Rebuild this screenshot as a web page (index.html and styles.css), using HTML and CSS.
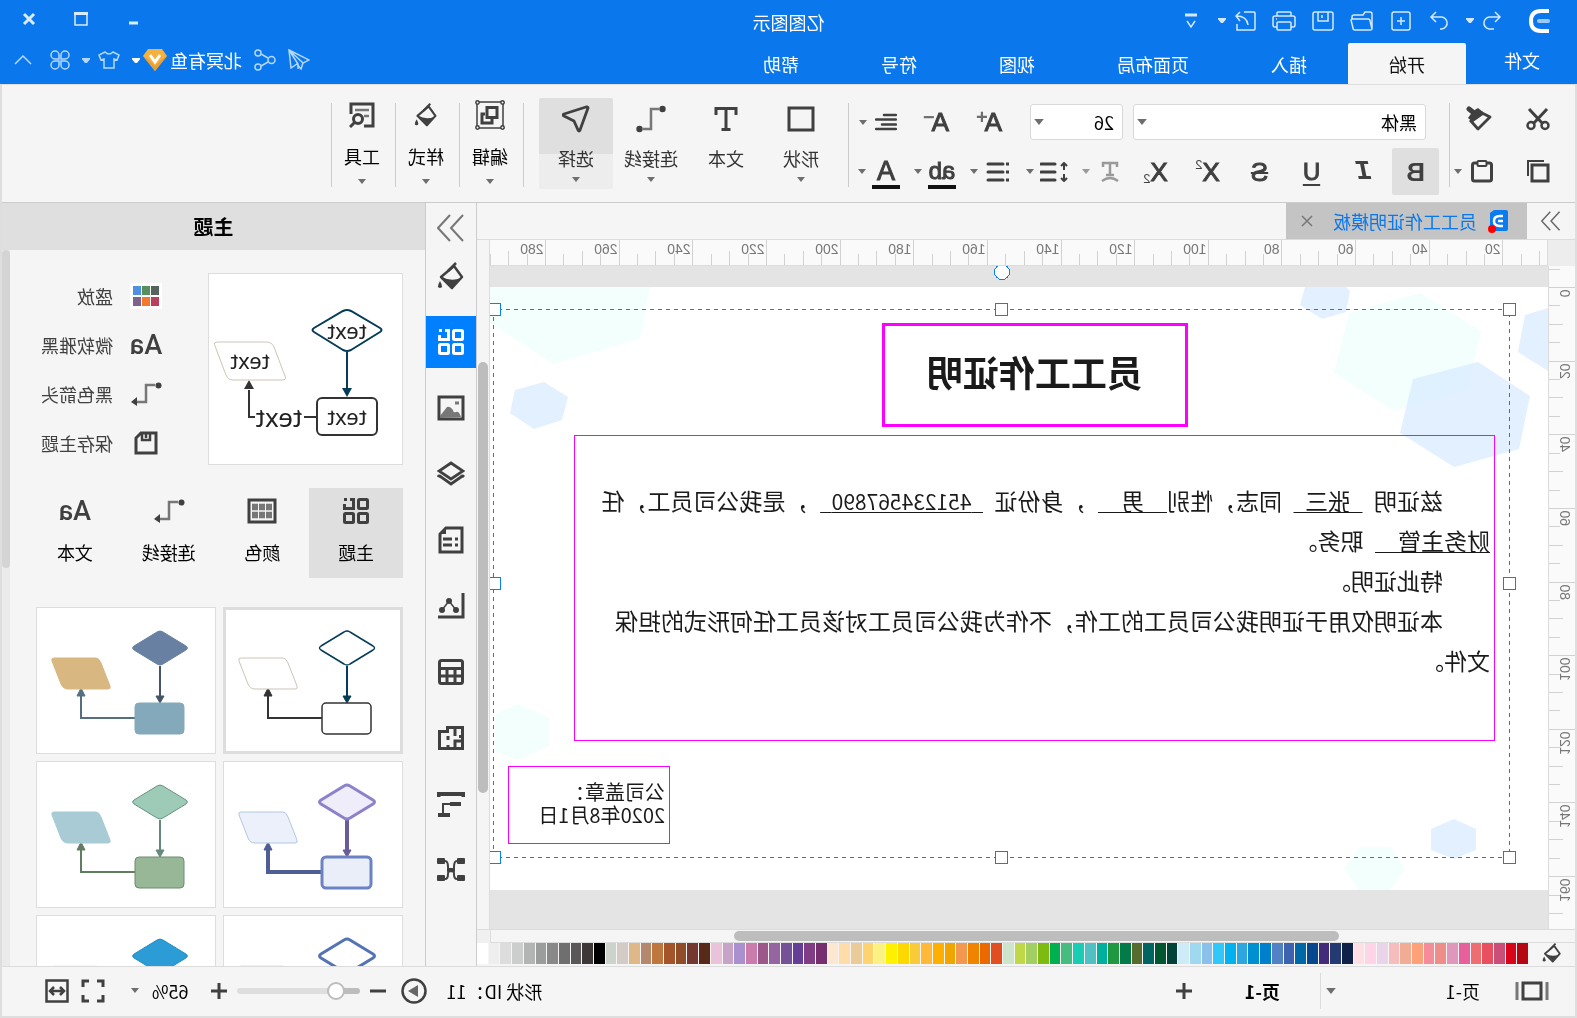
FILE: index.html
```html
<!DOCTYPE html>
<html lang="zh-CN">
<head>
<meta charset="utf-8">
<title>亿图图示</title>
<link rel="stylesheet" href="styles.css">
</head>
<body>
<svg class="sprite" aria-hidden="true">
  <symbol id="caret" viewBox="0 0 8 5"><path d="M0 0h8L4 5z" fill="currentColor"/></symbol>
  <symbol id="undo" viewBox="0 0 20 20"><path d="M7 1 2 6l5 5M2 6h9a6 6 0 0 1 2 12H8" /></symbol>
  <symbol id="redo" viewBox="0 0 20 20"><path d="m13 1 5 5-5 5M18 6H9a6 6 0 0 0-2 12h2" /></symbol>
  <symbol id="new" viewBox="0 0 20 20"><rect x="1" y="1" width="18" height="18" rx="2"/><path d="M10 6v8M6 10h8"/></symbol>
  <symbol id="folder" viewBox="0 0 24 20"><path d="M2 18V3q0-2 2-2h5l2 3h9q2 0 2 2v2M2 18q0 1 2 1h15q2 0 2-2l2-8q0-1-2-1H6Q4 8 4 10z"/></symbol>
  <symbol id="save" viewBox="0 0 22 20"><rect x="1" y="1" width="20" height="18" rx="2"/><path d="M6 1v9h10V1M12 4v3"/></symbol>
  <symbol id="print" viewBox="0 0 24 20"><path d="M5 5V2q0-1 1-1h12q1 0 1 1v3M5 16H3q-2 0-2-2V7q0-2 2-2h18q2 0 2 2v7q0 2-2 2h-2M19 8h1"/><rect x="5" y="11" width="14" height="8" rx="1"/></symbol>
  <symbol id="export" viewBox="0 0 22 20"><path d="M12 1H2q-1 0-1 1v16q0 1 1 1h17v-6M8 14q1-9 12-9M16 1l4 4-4 5"/></symbol>
  <symbol id="more" viewBox="0 0 12 18"><path d="M0 3h12" stroke-width="3"/><path d="m2 9 4 6 4-6"/></symbol>
  <symbol id="plane" viewBox="0 0 22 22"><path d="M21 1 1 11l6 3 2 6 4-5 6 4zM21 1 7 14M21 1l-9 14v5"/></symbol>
  <symbol id="share" viewBox="0 0 22 22"><circle cx="4.500" cy="11" r="3.500"/><circle cx="18" cy="4" r="3"/><circle cx="18" cy="18" r="3"/><path d="m8 9 7-4M8 13l7 4"/></symbol>
  <symbol id="shirt" viewBox="0 0 22 18"><path d="M7 1q4 4 8 0l6 3-2 5-3-1v9H6V8L3 9 1 4z"/></symbol>
  <symbol id="clover" viewBox="0 0 20 20"><path d="M9 9V5a4 4 0 1 0-4 4zM11 9h4a4 4 0 1 0-4-4zM9 11H5a4 4 0 1 0 4 4zM11 11v4a4 4 0 1 0 4-4z"/></symbol>
  <symbol id="scissors" viewBox="0 0 24 24"><path d="M3 2 17 17M21 2 7 17" stroke-width="3"/><circle cx="5" cy="18.500" r="3.500" stroke-width="2.500"/><circle cx="19" cy="18.500" r="3.500" stroke-width="2.500"/></symbol>
  <symbol id="painter" viewBox="0 0 26 26"><path d="M12 6 2 11l12 12 8-9" stroke-width="2.800" stroke-linejoin="round"/><path d="m9 6 5-4 5 3 5 7-5 4-10-7z" fill="currentColor" stroke="none"/><path d="m23 3-5 4" stroke-width="5" stroke-linecap="round"/></symbol>
  <symbol id="copy" viewBox="0 0 24 24"><rect x="2" y="6" width="16" height="16" stroke-width="3"/><path d="M6 2h16v15" stroke-width="2"/></symbol>
  <symbol id="paste" viewBox="0 0 24 24"><rect x="2.500" y="4" width="19" height="18" rx="2" stroke-width="3"/><rect x="7.500" y="2" width="9" height="5" rx="1" fill="#f5f5f5" stroke-width="2"/></symbol>
  <symbol id="align" viewBox="0 0 22 18"><path d="M1 2h12M1 6.500h20M1 11.500h14M1 16h20" stroke-width="2.500" stroke-linecap="round"/></symbol>
  <symbol id="spacing" viewBox="0 0 28 20"><path d="M13 2h14M13 10h14M13 18h14" stroke-width="3" stroke-linecap="round"/><path d="M4 1v7M1 4l3-3 3 3M4 19v-7M1 16l3 3 3-3" stroke-width="2"/></symbol>
  <symbol id="list" viewBox="0 0 28 20"><path d="M9 2h15M9 10h15M9 18h15" stroke-width="3" stroke-linecap="round"/><path d="M3 2h3M3 10h3M3 18h3" stroke-width="3"/></symbol>
  <symbol id="shape" viewBox="0 0 28 26"><rect x="2" y="2" width="24" height="22" stroke-width="3"/></symbol>
  <symbol id="texttool" viewBox="0 0 28 26"><path d="M4 9V2.500h20V9M14 3v20M9.500 23.500h9" stroke-width="3"/></symbol>
  <symbol id="connector" viewBox="0 0 30 28"><path d="M7 4h8v20h8" stroke="#777" stroke-width="2.500"/><circle cx="3.500" cy="4" r="3.200" fill="currentColor" stroke="none"/><circle cx="26.500" cy="24" r="3.200" fill="currentColor" stroke="none"/></symbol>
  <symbol id="connarrow" viewBox="0 0 32 24"><path d="M7 3h9v17h9" stroke="#777" stroke-width="2.500"/><circle cx="3.500" cy="3.500" r="3" fill="currentColor" stroke="none"/><path d="m25 15 6 5-6 4z" fill="currentColor" stroke="none"/></symbol>
  <symbol id="select" viewBox="0 0 28 28"><path d="M3 2q-1 0-1 1l8 22q1 2 2 0l4-9 10-5q2-1 0-2L4 2z" stroke-width="2.800" stroke-linejoin="round"/></symbol>
  <symbol id="group" viewBox="0 0 30 30"><rect x="2" y="2" width="26" height="26" stroke-width="1.500"/><g fill="#f5f5f5" stroke-width="1.500"><circle cx="2.500" cy="2.500" r="1.700"/><circle cx="27.500" cy="2.500" r="1.700"/><circle cx="2.500" cy="27.500" r="1.700"/><circle cx="27.500" cy="27.500" r="1.700"/></g><rect x="8" y="7.500" width="10" height="10" stroke-width="3"/><path d="M20 14h3v9h-10v-4" stroke-width="3"/></symbol>
  <symbol id="bucket" viewBox="0 0 28 28"><path d="M11 4 24 15 13 26 3 15z" stroke-width="2.500" stroke-linejoin="round"/><path d="M4 16q10 4 19-1L13 25z" fill="currentColor" stroke="none"/><path d="m9 1 8 8" stroke-width="2.500"/><path d="M25 19q4 7 0 7t0-7" fill="currentColor" stroke="none"/></symbol>
  <symbol id="find" viewBox="0 0 26 26"><path d="M11 24H2V2h22v10" stroke-width="3"/><path d="M6 8h14M6 14h5" stroke="#777" stroke-width="2.500"/><circle cx="17" cy="17" r="4.500" stroke-width="3"/><path d="m20 20 5 5" stroke-width="3"/></symbol>
  <symbol id="grid" viewBox="0 0 28 28"><g stroke-width="3"><rect x="2.500" y="2.500" width="9" height="9" rx="1"/><rect x="2.500" y="16.500" width="9" height="9" rx="1"/><rect x="16.500" y="16.500" width="9" height="9" rx="1"/><path d="M20 2.500h-3.500v9h9V7M23 2.500h3" /></g></symbol>
  <symbol id="image" viewBox="0 0 28 26"><rect x="2" y="2" width="24" height="22" stroke-width="3"/><path d="M4 22q2-6 5-5t3-2q3-4 6-3l7 9v2z" fill="#777" stroke="none"/><path d="M6 8h4" stroke="#777" stroke-width="3"/></symbol>
  <symbol id="layers" viewBox="0 0 28 28"><path d="m14 3 12 8-12 8L2 11z" stroke-width="2.800"/><path d="M1 17q2-2 3 0l10 7 10-7q2-2 3 0" stroke-width="2.800"/></symbol>
  <symbol id="note" viewBox="0 0 26 28"><path d="M2 2h16l6 6v18H2z" stroke-width="3"/><path d="M18 2v6h6" fill="currentColor" stroke="none"/><path d="M6 13h3M12 13h9M6 19h3M12 19h9" stroke-width="3"/></symbol>
  <symbol id="chart" viewBox="0 0 28 28"><path d="M2 1v24h25" stroke-width="3"/><path d="m9 18 7-9 7 9" stroke-width="1.500"/><g fill="currentColor" stroke="none"><circle cx="9" cy="18" r="3"/><circle cx="16" cy="9" r="3"/><circle cx="23" cy="18" r="3"/></g></symbol>
  <symbol id="table" viewBox="0 0 28 28"><rect x="2.500" y="2.500" width="23" height="23" rx="2" stroke-width="3"/><path d="M3 10.500h23M3 18h23M10 11v15M18 11v15" stroke-width="3"/></symbol>
  <symbol id="floor" viewBox="0 0 28 28"><path d="M2.500 3.500h15v4h8v17h-23zM10 4v8M2 12.500h4M3 17h7v8M17 12v4M17 21v4" stroke-width="3"/></symbol>
  <symbol id="gantt" viewBox="0 0 28 28"><path d="M1.500 7V4h25v3" stroke-width="4"/><path d="M4 14h11M15 25h12" stroke-width="4"/><path d="M14 14h8v9" stroke-width="2"/></symbol>
  <symbol id="network" viewBox="0 0 28 28"><path d="M4 5h4q3 0 3 6t3 4q3 2 3-4t3-6h5M4 23h4q3 0 3-5t3-4q3-1 3 4t3 5h5" stroke-width="2"/><g fill="currentColor" stroke="none"><rect y="2" width="8" height="6" rx="1"/><rect x="20" y="2" width="8" height="6" rx="1"/><rect y="19" width="8" height="6" rx="1"/><rect x="20" y="19" width="8" height="6" rx="1"/><rect x="10" y="12" width="8" height="4" rx="1"/></g></symbol>
  <symbol id="colors" viewBox="0 0 30 26"><rect x="2" y="2" width="26" height="22" stroke-width="3"/><path d="M5 9h20M5 17h20" stroke="#777" stroke-width="6.500" stroke-dasharray="6 1"/></symbol>
  <symbol id="disk" viewBox="0 0 24 24"><path d="M2 2h15l5 5v15H2z" stroke-width="3"/><path d="M8 3v6h8V3M12 3v4" stroke-width="2.500"/></symbol>
  <symbol id="more2" viewBox="0 0 28 28"><path d="m2 1 12 13L2 27M15 1l12 13-12 13" stroke-width="2"/></symbol>
  <symbol id="pages" viewBox="0 0 34 20"><rect x="8" y="2" width="18" height="16" stroke-width="3"/><path d="M2 1v18M32 1v18" stroke="#777" stroke-width="3"/></symbol>
  <symbol id="play" viewBox="0 0 26 26"><circle cx="13" cy="13" r="11.500" stroke-width="2.500"/><path d="m9 7 10 6-10 6z" fill="#666" stroke="none"/></symbol>
  <symbol id="full" viewBox="0 0 24 24"><path d="M8 2H2v6M16 2h6v6M8 22H2v-6M16 22h6v-6" stroke-width="3"/></symbol>
  <symbol id="fit" viewBox="0 0 24 24"><rect x="1.500" y="1.500" width="21" height="21" stroke-width="2.500"/><path d="M6 12h12M9 8l-4 4 4 4M15 8l4 4-4 4" stroke-width="2.500"/></symbol>
  <symbol id="flow" viewBox="0 0 180 147">
    <path class="down" d="M56 59v31"/><path class="down-head" d="m56 96-4-7h8z"/>
    <path class="back" d="M81 111h54V88"/><path class="back-head" d="m135 81-4 8h8z"/>
    <path class="diamond" d="M53 25q3-2 6 0l23 14q3 2 0 4L59 57q-3 2-6 0L30 43q-3-2 0-4z"/>
    <path class="slant" d="M120 51h42q3 0 2 3l-9 23q-2 5-7 5h-40q-3 0-2-3l9-23q2-5 5-5z"/>
    <rect class="box" x="32" y="96" width="49" height="31" rx="4"/>
  </symbol>
</svg>

<header class="titlebar">
  <div class="title-row">
    <div class="quick">
      <svg class="logo" viewBox="0 0 22 24" width="22" height="24"><path d="M1 2h8q10 0 10 10T9 22H1" stroke="#fff" stroke-width="4"/><path d="M2 12h9" stroke="#9cc9fb" stroke-width="4" stroke-linecap="round"/></svg>
      <button aria-label="撤销"><svg width="20" height="20"><use href="#undo"/></svg><svg width="8" height="5"><use href="#caret"/></svg></button>
      <button aria-label="恢复"><svg width="20" height="20"><use href="#redo"/></svg></button>
      <button aria-label="新建"><svg width="20" height="20"><use href="#new"/></svg></button>
      <button aria-label="打开"><svg width="24" height="20"><use href="#folder"/></svg></button>
      <button aria-label="保存"><svg width="22" height="20"><use href="#save"/></svg></button>
      <button aria-label="打印"><svg width="24" height="20"><use href="#print"/></svg></button>
      <button aria-label="导出"><svg width="22" height="20"><use href="#export"/></svg><svg width="8" height="5"><use href="#caret"/></svg></button>
      <button aria-label="更多"><svg width="12" height="18"><use href="#more"/></svg></button>
    </div>
    <h1 class="app-name">亿图图示</h1>
    <div class="window">
      <button aria-label="最小化"><svg width="14" height="14" viewBox="0 0 14 14"><path d="M2 11h9" stroke-width="3"/></svg></button>
      <button aria-label="最大化"><svg width="14" height="14" viewBox="0 0 14 14"><path d="M1 1h12v12H1z"/><path d="M0 1.500h14" stroke-width="3"/></svg></button>
      <button aria-label="关闭"><svg width="14" height="14" viewBox="0 0 14 14"><path d="m2 2 10 10M12 2 2 12" stroke-width="3"/></svg></button>
    </div>
  </div>
  <div class="menu-row">
    <nav class="menu">
      <button class="file">文件</button><button class="active">开始</button><button>插入</button><button>页面布局</button><button>视图</button><button>符号</button><button>帮助</button>
    </nav>
    <div class="account">
      <button aria-label="发送"><svg width="22" height="22"><use href="#plane"/></svg></button>
      <button aria-label="分享"><svg width="22" height="22"><use href="#share"/></svg></button>
      <button class="user">北冥有鱼<svg width="24" height="22" viewBox="0 0 24 22"><path d="M5 0h14l5 7-12 15L0 7z" fill="#f5b040" stroke="none"/><path d="m0 7 12 15L24 7l-5 3-7 7-7-7z" fill="#e89f38" stroke="none"/><path d="m7 6 5 7 5-7" stroke="#fff" stroke-width="3"/></svg><svg width="8" height="5"><use href="#caret"/></svg></button>
      <button aria-label="皮肤"><svg width="22" height="18"><use href="#shirt"/></svg><svg width="8" height="5"><use href="#caret"/></svg></button>
      <button aria-label="应用"><svg width="20" height="20"><use href="#clover"/></svg></button>
      <button class="fold" aria-label="收起"><svg width="18" height="10" viewBox="0 0 18 10"><path d="m1 9 8-8 8 8"/></svg></button>
    </div>
  </div>
</header>

<div class="frame">
  <section class="ribbon">
    <div class="clip">
      <div class="clip-row"><button aria-label="剪切"><svg width="24" height="24"><use href="#scissors"/></svg></button><button aria-label="格式刷"><svg width="26" height="26"><use href="#painter"/></svg></button></div>
      <div class="clip-row"><button aria-label="复制"><svg width="24" height="24"><use href="#copy"/></svg></button><button class="split" aria-label="粘贴"><svg width="24" height="24"><use href="#paste"/></svg><svg class="caret" width="8" height="5"><use href="#caret"/></svg></button></div>
    </div>
    <i class="rule"></i>
    <div class="font">
      <div class="font-row">
        <label class="combo combo-font"><select aria-label="字体"><option>黑体</option></select><svg class="caret" width="10" height="6"><use href="#caret"/></svg></label>
        <label class="combo combo-size"><select aria-label="字号"><option>26</option></select><svg class="caret" width="10" height="6"><use href="#caret"/></svg></label>
        <div class="sizes">
          <button aria-label="增大字号"><span class="glyph">A</span><sup>+</sup></button>
          <button aria-label="减小字号"><span class="glyph">A</span><sup>−</sup></button>
          <button class="split" aria-label="对齐"><svg width="22" height="18"><use href="#align"/></svg><svg class="caret" width="8" height="5"><use href="#caret"/></svg></button>
        </div>
      </div>
      <div class="format-row">
        <button class="on bold">B</button><button class="italic">I</button><button class="under">U</button><button class="strike">S</button><button class="script">X<sup>2</sup></button><button class="script">X<sub>2</sub></button>
        <div class="splits">
          <button class="split off" aria-label="文字方向"><span><svg width="18" height="22" viewBox="0 0 18 22"><path d="M2 6V2h14v4M9 2v12M5 14h8" stroke-width="2.500"/><path d="M1 20q8-6 16 0" stroke-width="2.500"/></svg></span><svg class="caret" width="8" height="5"><use href="#caret"/></svg></button>
          <button class="split" aria-label="行距"><span><svg width="28" height="20"><use href="#spacing"/></svg></span><svg class="caret" width="8" height="5"><use href="#caret"/></svg></button>
          <button class="split" aria-label="项目符号"><span><svg width="28" height="20"><use href="#list"/></svg></span><svg class="caret" width="8" height="5"><use href="#caret"/></svg></button>
          <button class="split"><span class="ink small">ab</span><svg class="caret" width="8" height="5"><use href="#caret"/></svg></button>
          <button class="split"><span class="ink">A</span><svg class="caret" width="8" height="5"><use href="#caret"/></svg></button>
        </div>
      </div>
    </div>
    <i class="rule"></i>
    <div class="tools">
      <button class="tool"><svg width="28" height="26"><use href="#shape"/></svg>形状<svg class="caret" width="8" height="5"><use href="#caret"/></svg></button>
      <button class="tool"><svg width="28" height="26"><use href="#texttool"/></svg>文本</button>
      <button class="tool"><svg width="30" height="28"><use href="#connector"/></svg>连接线<svg class="caret" width="8" height="5"><use href="#caret"/></svg></button>
      <button class="tool on"><svg width="28" height="28"><use href="#select"/></svg>选择<svg class="caret" width="8" height="5"><use href="#caret"/></svg></button>
    </div>
    <i class="rule"></i>
    <button class="tool block"><svg width="30" height="30"><use href="#group"/></svg>编辑<svg class="caret" width="8" height="5"><use href="#caret"/></svg></button>
    <i class="rule"></i>
    <button class="tool block"><svg width="24" height="24"><use href="#bucket"/></svg>样式<svg class="caret" width="8" height="5"><use href="#caret"/></svg></button>
    <i class="rule"></i>
    <button class="tool block"><svg width="26" height="26"><use href="#find"/></svg>工具<svg class="caret" width="8" height="5"><use href="#caret"/></svg></button>
    <i class="rule"></i>
  </section>

  <main class="work">
    <section class="editor">
      <div class="tabs">
        <button class="expand" aria-label="展开"><svg width="20" height="20"><use href="#more2"/></svg></button>
        <div class="doc-tab">
          <svg class="doc-icon" width="22" height="24" viewBox="0 0 22 24"><path d="M1 3q0-2 2-2h12l4 3v18H3q-2 0-2-2z" fill="#0a7cf0"/><path d="M6 7h3q6 0 6 5t-6 5H6M6 12h5" stroke="#fff" stroke-width="2.500"/><circle cx="17" cy="20" r="4" fill="#f00"/></svg>
          <span>员工工作证明模板</span>
          <button aria-label="关闭标签"><svg width="12" height="12" viewBox="0 0 12 12"><path d="m1 1 10 10M11 1 1 11" stroke-width="1.500"/></svg></button>
        </div>
      </div>
      <div class="sheet">
        <div class="corner"></div>
        <svg class="ruler ruler-x" id="ruler-x"></svg>
        <div class="gutter-top"></div>
        <svg class="ruler ruler-y" id="ruler-y"></svg>
        <div class="canvas">
          <div class="page">
            <svg class="hexes" width="1058" height="603">
              <g fill="#f3fffd"><path d="M898 0h160v36l-8 5-55 36-87-25z"/><path d="m128 6 71 20 15 60-60 38-73-21-14-59z"/><path d="m1030 417-31 14v28l31 14 23-9v-37z"/><path d="M189 560h-31l-15 22 15 21h31l15-21z"/></g>
              <g fill="#e3f0ff"><path d="m1004 95-24 15 6 23 28 9 24-16-5-23z"/><path d="M243 0h-41l-4 4 4 21 24 7 22-14z"/><path d="M0 21l23 7 7 37L0 84z"/><path d="m94 532-22 10v21l22 9 23-9v-21z"/></g>
              <path d="m70 75-52 34 11 53 65 18 54-34-13-54z" fill="#d4e8ff" fill-opacity=".65"/>
            </svg>
            <h2 class="heading">员工工作证明</h2>
            <div class="letter">
              <p>兹证明&ensp;<u>&ensp;张三&ensp;</u>&ensp;同志，性别<u>&ensp;&ensp;男&ensp;&ensp;</u>&ensp;，身份证&ensp;<u>&ensp;<span class="digits">451234567890</span>&ensp;</u>&ensp;，是我公司员工，任</p>
              <p class="flush"><u>财务主管&ensp;&ensp;</u>&ensp;职务。</p>
              <p>特此证明。</p>
              <p>本证明仅用于证明我公司员工的工作，不作为我公司员工对该员工任何形式的担保</p>
              <p class="flush">文件。</p>
            </div>
            <div class="seal"><p>公司盖章：</p><p>2020年8月1日</p></div>
          </div>
          <svg class="selection" width="1058" height="663">
            <rect x="38" y="43" width="1016" height="548" stroke-dasharray="4 4"/>
            <g fill="#fff"><circle cx="546" cy="6" r="7.500"/><rect x="32" y="37" width="12" height="12"/><rect x="540" y="37" width="12" height="12"/><rect x="1047" y="37" width="12" height="12"/><rect x="32" y="311" width="12" height="12"/><rect x="1047" y="311" width="12" height="12"/><rect x="32" y="585" width="12" height="12"/><rect x="540" y="585" width="12" height="12"/><rect x="1047" y="585" width="12" height="12"/></g>
          </svg>
        </div>
        <div class="gutter"><i class="thumb-y"></i></div>
        <div class="scroll-x"><i class="thumb-x"></i></div>
        <div class="gutter-end"></div>
      </div>
      <div class="palette">
        <button class="fill" aria-label="填充"><svg width="20" height="20"><use href="#bucket"/></svg></button>
        <div class="swatches" id="swatches"></div>
      </div>
    </section>

    <aside class="dock">
      <button aria-label="收起面板"><svg width="28" height="28"><use href="#more2"/></svg></button>
      <button aria-label="填充"><svg width="28" height="28"><use href="#bucket"/></svg></button>
      <button class="on" aria-label="主题"><svg width="28" height="28"><use href="#grid"/></svg></button>
      <button aria-label="图片"><svg width="28" height="26"><use href="#image"/></svg></button>
      <button aria-label="图层"><svg width="28" height="28"><use href="#layers"/></svg></button>
      <button aria-label="备注"><svg width="26" height="28"><use href="#note"/></svg></button>
      <button aria-label="图表"><svg width="28" height="28"><use href="#chart"/></svg></button>
      <button aria-label="表格"><svg width="28" height="28"><use href="#table"/></svg></button>
      <button aria-label="平面图"><svg width="28" height="28"><use href="#floor"/></svg></button>
      <button aria-label="甘特图"><svg width="28" height="28"><use href="#gantt"/></svg></button>
      <button aria-label="导图"><svg width="28" height="28"><use href="#network"/></svg></button>
    </aside>

    <aside class="panel">
      <h2 class="panel-title">主题</h2>
      <div class="panel-body">
        <div class="panel-main">
          <div class="current">
            <svg class="preview" viewBox="0 0 193 190" width="193" height="190">
              <path d="M55 78v36" stroke="#053c58" stroke-width="2"/><path d="m55 123-5-9h10z" fill="#053c58"/>
              <path d="M85 143h13M147 143h6v-27" stroke="#333" stroke-width="2"/><path d="m153 106-5 9h10z" fill="#333"/>
              <path d="M51 37q4-2 8 0l29 17q3 2 0 4L59 76q-4 2-8 0L22 58q-3-2 0-4z" stroke="#053c58" stroke-width="2"/>
              <path d="M136 68h48q5 0 3 4l-11 29q-2 5-7 5h-49q-5 0-3-4l11-29q2-5 8-5z" stroke="#cdc5b6"/>
              <rect x="25" y="124" width="60" height="37" rx="5" stroke="#333" stroke-width="2"/>
              <g class="preview-text"><text x="55" y="65">text</text><text x="152" y="95">text</text><text x="55" y="151">text</text><text class="big" x="123" y="153">text</text></g>
            </svg>
            <ul class="props">
              <li><button><svg class="chips" width="32" height="26" viewBox="0 0 32 26"><path d="M0 0h32v26H0z" fill="#fff"/><path d="M3 3h8v9H3z" fill="#566460"/><path d="M12 3h8v9h-8z" fill="#57905f"/><path d="M21 3h8v9h-8z" fill="#4f90e0"/><path d="M3 14h8v9H3z" fill="#b9405f"/><path d="M12 14h8v9h-8z" fill="#f5782f"/><path d="M21 14h8v9h-8z" fill="#7e648c"/></svg>盛放</button></li>
              <li><button><span class="aa">Aa</span>微软雅黑</button></li>
              <li><button><svg width="32" height="24"><use href="#connarrow"/></svg>黑色箭头</button></li>
              <li><button><svg width="32" height="24"><use href="#disk"/></svg>保存主题</button></li>
            </ul>
          </div>
          <div class="kinds">
            <button class="on"><svg width="28" height="28"><use href="#grid"/></svg>主题</button>
            <button><svg width="30" height="26"><use href="#colors"/></svg>颜色</button>
            <button><svg width="32" height="24"><use href="#connarrow"/></svg>连接线</button>
            <button><span class="aa">Aa</span>文本</button>
          </div>
          <div class="themes">
            <button class="theme line on" aria-label="主题 1"><svg><use href="#flow"/></svg></button>
            <button class="theme slate" aria-label="主题 2"><svg><use href="#flow"/></svg></button>
            <button class="theme violet" aria-label="主题 3"><svg><use href="#flow"/></svg></button>
            <button class="theme green" aria-label="主题 4"><svg><use href="#flow"/></svg></button>
            <button class="theme navy" aria-label="主题 5"><svg><use href="#flow"/></svg></button>
            <button class="theme azure" aria-label="主题 6"><svg><use href="#flow"/></svg></button>
          </div>
        </div>
        <div class="panel-scroll"><i></i></div>
      </div>
    </aside>
  </main>

  <footer class="status">
    <svg width="34" height="20"><use href="#pages"/></svg>
    <label class="page-pick"><select aria-label="页面"><option>页-1</option></select><svg class="caret" width="10" height="6"><use href="#caret"/></svg></label>
    <button class="page-tab">页-1</button>
    <button class="add-page" aria-label="新增页"><svg width="16" height="16" viewBox="0 0 16 16"><path d="M8 0v16M0 8h16" stroke-width="3"/></svg></button>
    <span class="shape-id">形状 ID：11</span>
    <button class="present" aria-label="放映"><svg width="26" height="26"><use href="#play"/></svg></button>
    <div class="zoom">
      <button aria-label="缩小"><svg width="16" height="16" viewBox="0 0 16 16"><path d="M0 8h16" stroke-width="3"/></svg></button>
      <input type="range" min="0" max="100" value="14" aria-label="缩放">
      <button aria-label="放大"><svg width="16" height="16" viewBox="0 0 16 16"><path d="M8 0v16M0 8h16" stroke-width="3"/></svg></button>
    </div>
    <button class="percent">65%<svg class="caret" width="8" height="5"><use href="#caret"/></svg></button>
    <button aria-label="全屏"><svg width="24" height="24"><use href="#full"/></svg></button>
    <button class="fit" aria-label="适应宽度"><svg width="24" height="24"><use href="#fit"/></svg></button>
  </footer>
</div>
<script src="app.js"></script>
</body>
</html>
```
FILE: styles.css
```css
* { box-sizing: border-box; }

/* The whole interface is shown flipped left to right. */
body {
  margin: 0;
  min-height: 100vh;
  height: 100vh;
  display: flex;
  flex-direction: column;
  overflow: hidden;
  transform: scaleX(-1);
  background: #f5f5f5;
  color: #111;
  font: 18px/24px "Noto Sans CJK SC", sans-serif;
}

h1, h2, p, ul { margin: 0; padding: 0; font-weight: 400; }
ul { list-style: none; }
button {
  margin: 0;
  padding: 0;
  border: 0;
  background: none;
  color: inherit;
  font: inherit;
  display: flex;
  align-items: center;
  justify-content: center;
  flex: none;
}
svg { fill: none; stroke: currentColor; flex: none; display: block; }
select { appearance: none; border: 0; background: none; font: inherit; color: #000; width: 100%; }
.sprite { position: absolute; width: 0; height: 0; }
.caret { color: #6e6e6e; stroke: none; }

/* title bar */
.titlebar { height: 84px; background: #0a78ec; color: #fff; display: flex; flex-direction: column; flex: none; }
.title-row { height: 43px; display: grid; grid-template-columns: 1fr auto 1fr; align-items: center; }
.titlebar svg { stroke-width: 1.5; }
.quick { display: flex; align-items: center; gap: 16px; padding: 0 0 2px 27px; color: #d4e8ff; }
.quick button { min-width: 22px; }
.quick button, .account button { gap: 8px; }
.logo { margin-right: 10px; }
.app-name { font-size: 18px; line-height: 24px; }
.window { display: flex; justify-content: flex-end; gap: 38px; padding-right: 22px; padding-bottom: 6px; color: #d9ebff; }
.menu-row { flex: 1; display: flex; justify-content: space-between; }
.menu { display: flex; }
.menu button { padding: 0 41px; }
.menu .file { padding: 0 38px 8px 37px; }
.menu .active { background: #f5f5f5; color: #111; border-radius: 2px 2px 0 0; }
.account { display: flex; align-items: center; gap: 12px; padding: 0 14px 7px 0; color: #b5d8ff; }
.account .user { color: #fff; gap: 3px; }
.account .fold { margin-left: 6px; }

.frame { flex: 1; min-height: 0; display: flex; flex-direction: column; border: solid #dedede; border-width: 1px 2px 2px; color: #111; }

/* ribbon */
.ribbon { flex: none; height: 118px; display: flex; border-bottom: 1px solid #ccc; padding-top: 13px; color: #404040; }
.rule { width: 1px; height: 84px; margin-top: 5px; background: #ccc; flex: none; }
.clip { width: 125px; padding: 0 0 8px 25px; display: flex; flex-direction: column; gap: 5px; justify-content: flex-end; }
.clip-row { height: 48px; display: flex; align-items: center; gap: 32px; }
.clip-row:first-child { padding-bottom: 4px; gap: 34px; }
.split { gap: 8px; }
.font { width: 600px; padding-top: 6px; display: flex; flex-direction: column; gap: 8px; }
.font-row { height: 36px; display: flex; gap: 10px; padding-left: 23px; }
.combo { display: flex; align-items: center; background: #fff; border: 1px solid #d9d9d9; border-radius: 3px; padding: 0 3px 0 8px; }
.combo-font { width: 293px; }
.combo-size { width: 93px; }
.sizes { display: flex; align-items: center; gap: 25px; padding-left: 17px; }
.sizes button:not(.split) { align-items: flex-start; width: 28px; line-height: 28px; }
.glyph { font: 26px/28px "Liberation Sans", sans-serif; -webkit-text-stroke: 1px; }
sup, sub { font-size: 12px; line-height: 12px; vertical-align: baseline; }
.sizes sup { font: bold 20px/18px "Liberation Sans", sans-serif; color: #6e6e6e; margin-left: -3px; }
.format-row { height: 47px; display: flex; gap: 5px; padding-left: 10px; font: 26px/28px "Liberation Sans", sans-serif; }
.format-row > button { width: 47px; border-radius: 2px; }
.format-row .on { background: #dfdfdf; }
.bold { font-weight: 700; }
.italic { font: italic bold 28px/28px "Liberation Mono", monospace; }
.under { text-decoration: underline 2px; text-underline-offset: 4px; font-size: 24px; }
.strike { text-decoration: line-through 2px; }
.under, .strike, .script { -webkit-text-stroke: 1px; }
.script sup, .script sub { font-size: 13px; -webkit-text-stroke: 0; }
.script sup { padding-bottom: 14px; }
.script sub { padding-top: 14px; }
.splits { display: flex; gap: 14px; padding-left: 3px; align-items: center; }
.splits .split { gap: 6px; }
.splits span { width: 28px; display: flex; justify-content: center; }
.off, .off .caret { color: #999; }
.splits .ink { border-bottom: 4px solid #111; height: 31px; line-height: 26px; font-size: 27px; -webkit-text-stroke: 1px; margin-top: 4px; }
.splits .small { font-size: 24px; }
.tools { display: flex; gap: 1px; padding: 0 15px 0 10px; }
.tool { width: 74px; height: 91px; display: grid; grid-template-rows: 42px 36px 6px; justify-items: center; align-content: start; color: #333; border-radius: 2px; }
.tool svg:first-child { color: #404040; }
.tool.on { background: linear-gradient(#dfdfdf 56px, #ededed 56px); }
.block { width: 63px; grid-template-rows: 34px 48px 2px; color: #000; padding-left: 3px; }

/* editor */
.work { flex: 1; min-height: 0; display: flex; }
.editor { flex: 1; min-width: 0; display: flex; flex-direction: column; }
.tabs { height: 37px; flex: none; border-bottom: 1px solid #dcdcdc; display: flex; }
.expand { width: 48px; color: #666; }
.doc-tab { width: 241px; background: #c4c4c4; display: flex; align-items: center; gap: 10px; padding-left: 18px; color: #0a78ec; }
.doc-tab button { color: #777; margin-left: 10px; }
.doc-icon { stroke: none; }
.sheet { flex: 1; min-height: 0; display: grid; grid-template: 26px 1fr 14px / 27px 1fr 13px; }
.corner { background: #ededed; }
.ruler { background: #fafafa; width: 100%; height: 100%; overflow: hidden; stroke: #d2d2d2; }
.ruler-x { border-bottom: 1px solid #dcdcdc; border-left: 1px solid #dcdcdc; }
.ruler-y { border-right: 1px solid #dcdcdc; }
.ruler text { font: 14px "Liberation Sans", sans-serif; fill: #777; stroke: none; }
.gutter-top, .gutter { border-left: 1px solid #dcdcdc; }
.gutter { padding: 96px 1px 0; }
.thumb-y { display: block; width: 10px; height: 431px; border-radius: 5px; background: #bdbdbd; }
.scroll-x { grid-column: 1 / 3; border: 1px solid #dcdcdc; border-left: 0; padding: 1px 0 0 236px; }
.thumb-x { display: block; width: 605px; height: 10px; border-radius: 5px; background: #bdbdbd; }
.gutter-end { background: #f0f0f0; border-top: 1px solid #dcdcdc; }
.palette { height: 23px; flex: none; display: flex; align-items: flex-start; }
.fill { width: 47px; color: #404040; padding-right: 2px; }
.swatches { flex: 1; height: 21px; display: flex; gap: 1px; }
.swatches button { flex: 1; height: 21px; }

.canvas { position: relative; overflow: hidden; background: #e4e4e4; }
.page { position: absolute; top: 21px; left: 0; width: 100%; height: 603px; background: #fff; }
.hexes, .selection { position: absolute; top: 0; left: 0; }
.hexes { stroke: none; }
.selection { fill: none; stroke: #0a80f5; shape-rendering: crispEdges; }
.heading, .letter, .seal { position: absolute; border: 1px solid #f0f; color: #1a1a1a; }
.heading { left: 360px; top: 36px; width: 306px; height: 104px; border-width: 3px; font-size: 36px; font-weight: 700; line-height: 90px; text-align: center; }
.letter { left: 53px; top: 148px; width: 921px; height: 306px; padding: 44px 0 0 4px; font-size: 23px; line-height: 40px; white-space: nowrap; }
.letter p { text-indent: 47px; height: 40px; }
.letter .flush { text-indent: 0; }
.letter u { text-decoration-thickness: 1px; text-underline-offset: 2px; }
.digits { font-size: 21px; }
.seal { left: 878px; top: 479px; width: 162px; height: 78px; padding: 13px 4px; font-size: 20px; line-height: 23px; }

/* dock */
.dock { width: 52px; flex: none; border: solid #ccc; border-width: 0 1px; color: #404040; display: flex; flex-direction: column; }
.dock button { height: 52px; margin-bottom: 14px; }
.dock button:first-child { height: 50px; margin-bottom: -3px; color: #777; }
.dock .on { background: #0080ff; color: #fff; }

/* theme panel */
.panel { width: 423px; flex: none; display: flex; flex-direction: column; min-height: 0; }
.panel-title { height: 47px; flex: none; background: #dfdfdf; text-align: center; font-size: 20px; font-weight: 700; line-height: 47px; color: #000; }
.panel-body { flex: 1; min-height: 0; display: flex; }
.panel-main { flex: 1; min-width: 0; overflow: hidden; padding: 23px 24px 0 22px; display: flex; flex-direction: column; }
.panel-scroll { width: 8px; background: #ebebeb; }
.panel-scroll i { display: block; height: 318px; border-radius: 4px; background: #d4d4d4; }
.current { display: flex; gap: 46px; height: 192px; }
.preview { border: 1px solid #ddd; background: #fff; stroke: none; width: 195px; height: 192px; }
.preview-text { font: 22px "Noto Sans", sans-serif; text-anchor: middle; fill: #222; stroke: none; }
.big { font-size: 26px; }
.props { margin-top: -2px; }
.props button { height: 49px; gap: 17px; color: #404040; }
.chips { stroke: none; }
.aa { width: 32px; font: 500 27px/28px Roboto, sans-serif; color: #404040; display: flex; justify-content: center; }
.kinds { display: flex; margin: 23px -6px 0 0; height: 90px; flex: none; color: #404040; }
.kinds button { flex: 1; display: grid; grid-template-rows: 46px 36px; place-items: center; align-content: start; color: #000; }
.kinds button > :first-child { color: #404040; }
.kinds .on { background: #dfdfdf; }
.themes { display: grid; grid-template-columns: 180px 180px; gap: 7px; margin-top: 29px; }
.theme { height: 147px; border: 1px solid #ddd; background: #fff; overflow: hidden; }
.theme.on { border-width: 3px; }
.theme svg { width: 180px; height: 147px; margin: -1px; stroke: none; }
.theme.on svg { margin: -3px; }
.diamond { fill: var(--d); stroke: var(--ds); stroke-width: var(--w); }
.box { fill: var(--b); stroke: var(--bs); stroke-width: var(--w); }
.slant { fill: var(--p); stroke: var(--ps); }
.down { stroke: var(--a1); stroke-width: var(--aw); }
.down-head { fill: var(--a1); stroke: var(--a1); }
.back { stroke: var(--a2); stroke-width: var(--aw); }
.back-head { fill: var(--a2); stroke: var(--a2); }
.line { --d: #fff; --ds: #053c58; --b: #fff; --bs: #333; --p: #fff; --ps: #cdc5b6; --a1: #053c58; --a2: #333; --w: 1.5; --aw: 2; }
.slate { --d: #6880a2; --ds: #6880a2; --b: #84a9bb; --bs: #84a9bb; --p: #d8b781; --ps: #d8b781; --a1: #465468; --a2: #547080; --w: 1; --aw: 2; }
.violet { --d: #f0edfa; --ds: #8c82cb; --b: #eaeef8; --bs: #6b83c2; --p: #ebf0fa; --ps: #b3c8e0; --a1: #695c98; --a2: #4f5f94; --w: 3; --aw: 4; }
.green { --d: #9dcbb8; --ds: #68917f; --b: #98b796; --bs: #6b8b6e; --p: #a9cbd5; --ps: #a9cbd5; --a1: #64897d; --a2: #627c62; --w: 1; --aw: 2; }
.navy { --d: #fff; --ds: #5473b4; --b: #fff; --bs: #5473b4; --p: #f5eff1; --ps: #e8dde0; --a1: #5473b4; --a2: #5473b4; --w: 3; --aw: 2; }
.azure { --d: #2b9cd6; --ds: #2590c8; --b: #2b9cd6; --bs: #2590c8; --p: #ede8df; --ps: #ede8df; --a1: #2590c8; --a2: #2590c8; --w: 1; --aw: 2; }

/* status bar */
.status { height: 50px; flex: none; border-top: 1px solid #dcdcdc; display: flex; align-items: center; padding: 0 43px 2px 26px; color: #404040; background: #f5f5f5; }
.page-pick { width: 160px; height: 36px; margin-left: 35px; display: flex; align-items: center; border-right: 1px solid #dcdcdc; padding-right: 5px; }
.page-tab { margin-left: 40px; font-weight: 700; color: #000; }
.add-page { margin-left: 53px; }
.shape-id { margin-left: auto; color: #000; }
.present { margin-left: 20px; }
.zoom { display: flex; align-items: center; gap: 10px; margin-left: 15px; }
.zoom input { appearance: none; width: 123px; height: 6px; margin: 0; border-radius: 3px; background: linear-gradient(90deg, #bdbdbd 20%, #dedede 20%); }
.zoom input::-webkit-slider-thumb { appearance: none; width: 18px; height: 18px; border: 2px solid #bdbdbd; border-radius: 50%; background: #fff; }
.percent { margin: 0 26px 0 22px; gap: 13px; color: #000; }
.fit { margin-left: 12px; }
```
FILE: app.js
```js
const NS = "http://www.w3.org/2000/svg";
const STEP = 18.41;

function add(parent, name, attrs, text) {
  const el = document.createElementNS(NS, name);
  for (const key in attrs) el.setAttribute(key, attrs[key]);
  if (text !== undefined) el.textContent = text;
  parent.appendChild(el);
}

// Every fourth tick is numbered; the one halfway between is slightly longer.
function drawRulerX() {
  const ruler = document.getElementById("ruler-x");
  const width = ruler.getBoundingClientRect().width;
  ruler.replaceChildren();
  for (let n = 2; n * STEP - 29 < width; n++) {
    const x = Math.round(n * STEP - 29) - 0.5;
    const top = n % 4 === 0 ? 0 : n % 2 === 0 ? 11 : 14;
    add(ruler, "line", { x1: x, x2: x, y1: top, y2: 26 });
    if (n % 4 === 0 && x + 30 < width) add(ruler, "text", { x: x + 2, y: 14 }, n * 5);
  }
}

function drawRulerY() {
  const ruler = document.getElementById("ruler-y");
  const height = ruler.getBoundingClientRect().height;
  ruler.replaceChildren();
  for (let n = -1; 21 + n * STEP < height; n++) {
    const y = Math.round(21 + n * STEP) + 0.5;
    const left = n % 4 === 0 ? 0 : n % 2 === 0 ? 12 : 15;
    add(ruler, "line", { x1: left, x2: 27, y1: y, y2: y });
    if (n % 4 === 0 && y + 28 < height) {
      add(ruler, "text", { transform: `translate(15 ${y + 2}) rotate(-90)`, "text-anchor": "end" }, n * 5);
    }
  }
}

drawRulerX();
drawRulerY();
window.addEventListener("resize", () => { drawRulerX(); drawRulerY(); });

const colors = `b50712 d80618 c94e78 e85060 ef6d70 e85f9e e097bc ef8d88 f48d99 ffa178 f2ab94 f7bcbc ead4ea ffd4e6 ffdfe6
0f2148 243a72 422b78 07478e 0068a8 3d62b0 5282c4 007fcc 008fd0 2ea7e0 02b2f0 30c8fa 8ac0ea 9fd8ef ceebf7
024238 005630 016460 566b2e 037a48 1f983f 00b09c 50c0c4 19ccb4 46bc80 00b050 7eba10 a2cf64 c0d848 cde6cb
e14e20 ec6800 f08300 f29850 f0a500 ffaf00 ffb838 facb38 ffd800 fff100 fcf284 ffd470 e9cc98 ffdca8 fce8d0
772e6f 803d86 653e98 755298 9465a0 9c588a cb7bac aa90ce c7a3c8 eac3da
582819 733930 914d29 a55328 c0773e b5876c deb887 d4cbc6 cbd3cb
000000 3e3737 595757 6f6f6f 898989 9b9d9c b3b5b4 cccdcd dddddd eeeeee ffffff`.split(/\s+/);
const swatches = document.getElementById("swatches");
for (const color of colors) {
  const b = document.createElement("button");
  b.style.background = "#" + color;
  b.setAttribute("aria-label", "#" + color);
  swatches.appendChild(b);
}
```
